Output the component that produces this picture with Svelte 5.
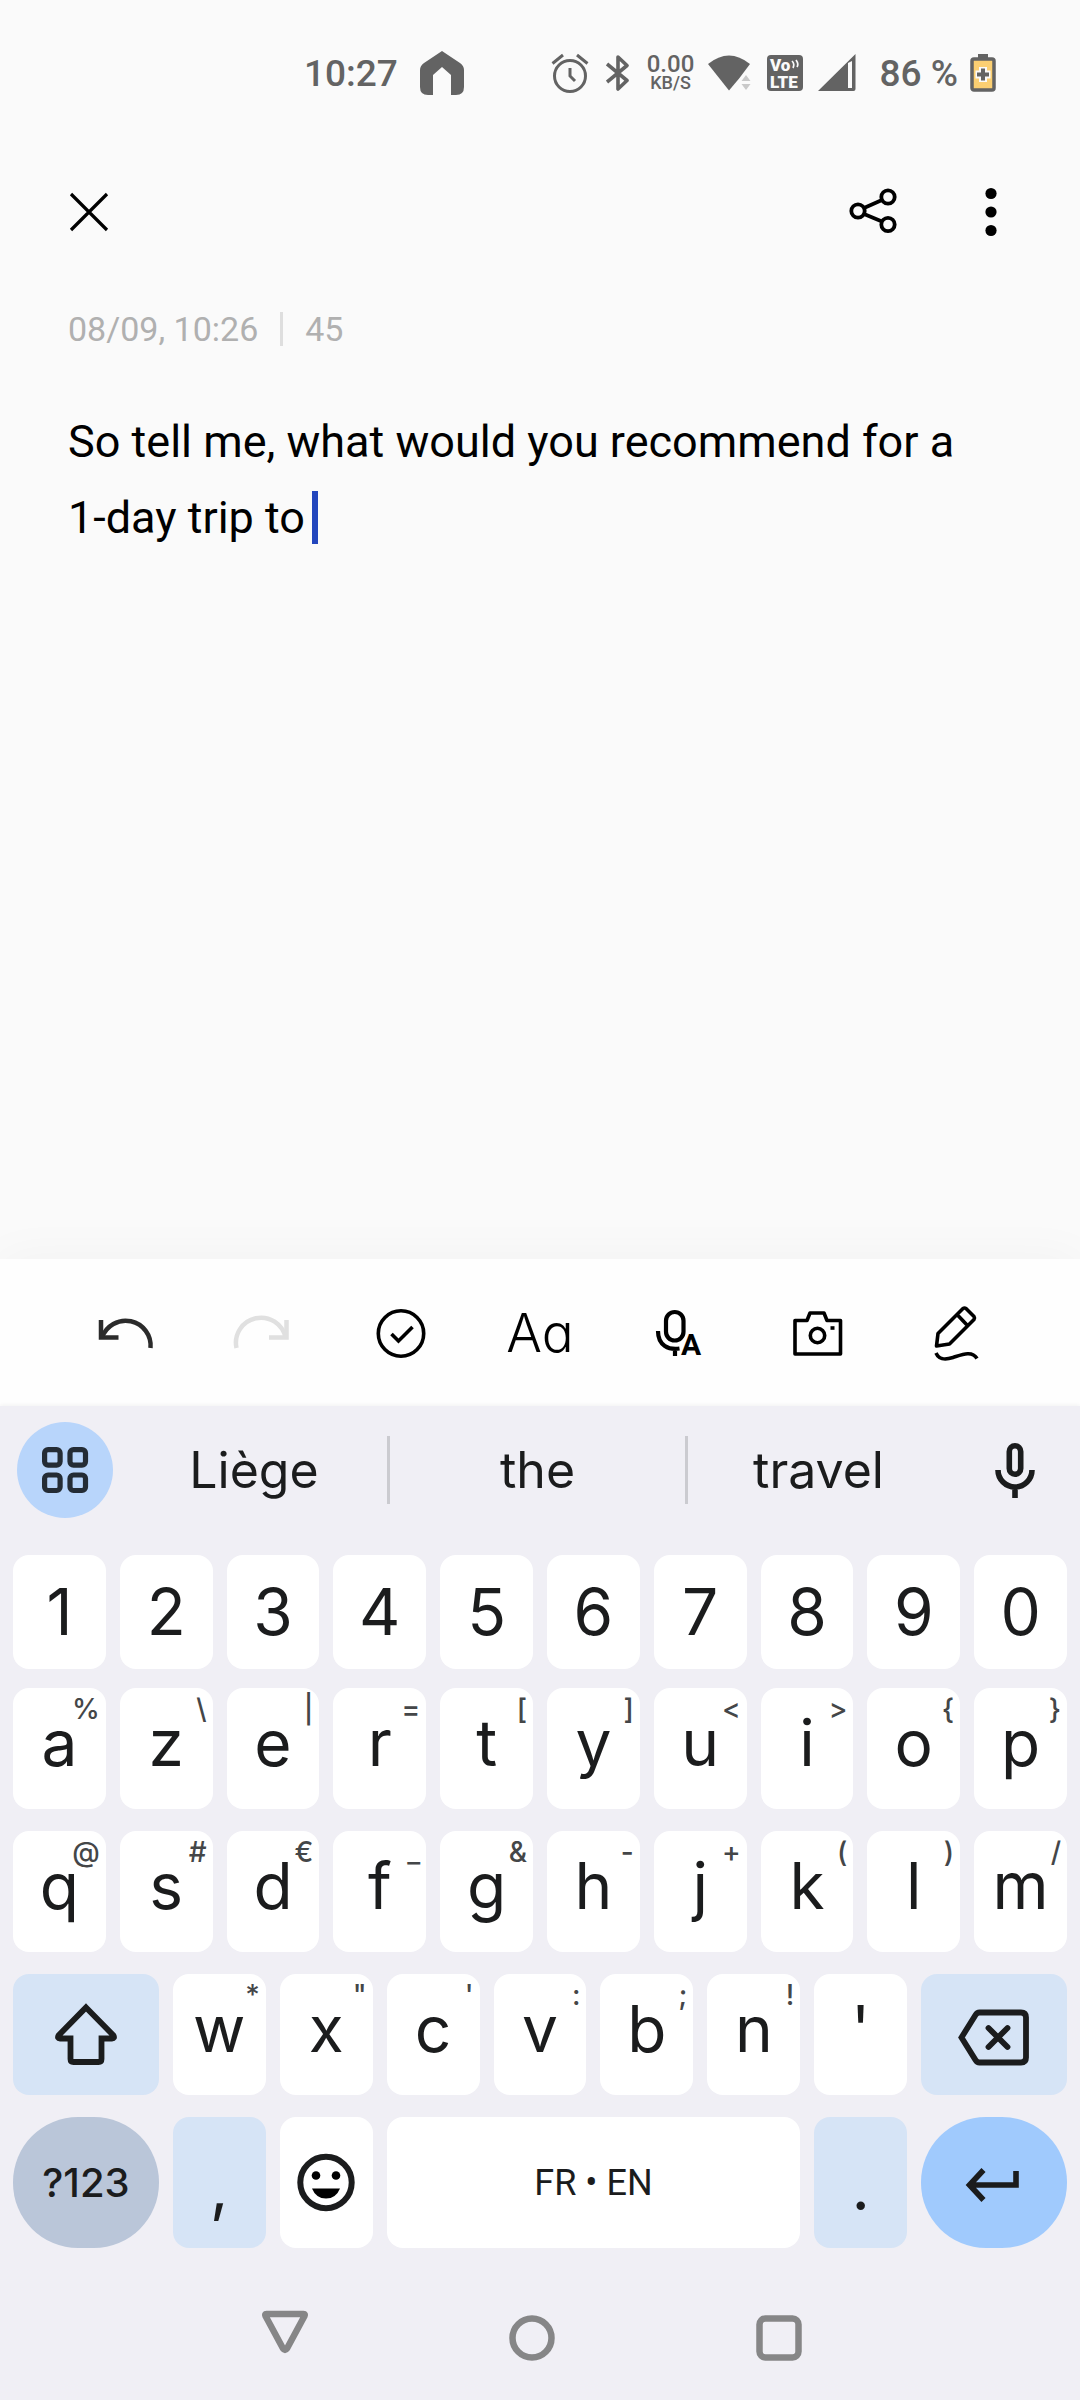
<script>
  let note = $state('So tell me, what would you recommend for a 1-day trip to ');

  const digits = ['1', '2', '3', '4', '5', '6', '7', '8', '9', '0'];
  const top = [['a', '%'], ['z', '\\'], ['e', '|'], ['r', '='], ['t', '['], ['y', ']'], ['u', '<'], ['i', '>'], ['o', '{'], ['p', '}']];
  const home = [['q', '@'], ['s', '#'], ['d', '€'], ['f', '_'], ['g', '&'], ['h', '-'], ['j', '+'], ['k', '('], ['l', ')'], ['m', '/']];
  const bottom = [['w', '*'], ['x', '"'], ['c', "'"], ['v', ':'], ['b', ';'], ['n', '!'], ["'", '']];
</script>

{#snippet key(label, hint)}
  <button class="key letter">
    {label}{#if hint}<span class="hint">{hint}</span>{/if}
  </button>
{/snippet}

<div class="screen">
  <header class="status">
    <div class="clock">
      <span>10:27</span>
      <svg width="44" height="44" viewBox="0 0 44 44"><path fill="#636363" d="M22 0 40 12q4 3 4 7v17q0 8-8 8h-5V24l-9-8-9 8v20H8q-8 0-8-8V19q0-4 4-7z"/></svg>
    </div>
    <div class="indicators">
      <svg width="38" height="40" viewBox="0 0 38 40" fill="none" stroke="#636363" stroke-width="3"><circle cx="19" cy="23" r="15.500"/><path d="M19 15v8l5 5M1.500 10.500 12 2M36.500 10.500 26 2"/></svg>
      <svg class="bt" width="24" height="38" viewBox="0 0 24 38" fill="none" stroke="#636363" stroke-width="3.600" stroke-linejoin="round"><path d="m1 10 20 16.500-9 8.500V3L21 11.500 1 28"/></svg>
      <div class="speed"><span class="rate">0.00</span><span class="unit">KB/S</span></div>
      <svg class="wifi" width="44" height="38" viewBox="0 0 44 38"><path fill="#636363" d="M0 10Q21-7 42 10L31.500 24 21 36.500z"/><path fill="#c9c9c9" d="m38 21 4.500 6h-9zM38 36l4.500-6h-9z"/></svg>
      <svg class="volte" width="36" height="38" viewBox="0 0 36 38"><rect y="1" width="36" height="36" rx="4" fill="#636363"/><text x="3" y="17" class="vo">Vo</text><text x="3" y="34" class="vo">LTE</text><path d="M25 7q3 3 1 7M29 6q3 4 1 7" fill="none" stroke="#fafafa" stroke-width="1.700"/></svg>
      <svg class="signal" width="38" height="38" viewBox="0 0 38 38"><path fill="#636363" d="M37.500 0v35q0 2-2 2H0zM30 9v25h4V7z" fill-rule="evenodd"/></svg>
      <span>86 %</span>
      <svg class="battery" width="26" height="40" viewBox="0 0 26 40"><path fill="#636363" d="M8 1h10v4H8z"/><rect x="2" y="6" width="22" height="31" rx="2" fill="#fbcf72" stroke="#636363" stroke-width="3.500"/><path d="M13 14v15M5.500 21.500h15" stroke="#fafafa" stroke-width="8"/><path d="M13 15.500v12M7 21.500h12" stroke="#636363" stroke-width="4"/></svg>
    </div>
  </header>

  <nav class="appbar" aria-label="Note">
    <button class="plain" aria-label="Close"><svg width="44" height="44" viewBox="0 0 44 44" stroke="#000" stroke-width="3.200"><path d="m4 4 36 36M40 4 4 40"/></svg></button>
    <span class="spacer"></span>
    <button class="plain" aria-label="Share"><svg width="52" height="48" viewBox="0 0 52 48" fill="none" stroke="#000" stroke-width="3.800"><circle cx="11" cy="23" r="6.700"/><circle cx="41" cy="9" r="6.700"/><circle cx="41" cy="36.500" r="6.700"/><path d="m17 20 18-8M17 26l18 7.500"/></svg></button>
    <button class="plain" aria-label="More options"><svg width="24" height="52" viewBox="0 0 24 52"><circle cx="12" cy="7.500" r="5.600"/><circle cx="12" cy="26" r="5.600"/><circle cx="12" cy="44.500" r="5.600"/></svg></button>
  </nav>

  <div class="meta"><span>08/09, 10:26</span><i></i><span>45</span></div>

  <main class="editor">
    <textarea aria-label="Note text" bind:value={note} spellcheck="false"></textarea>
    <span class="caret"></span>
  </main>

  <div class="toolbar">
    <button class="plain" aria-label="Undo"><svg width="64" height="64" viewBox="0 0 64 64" fill="none" stroke="#2b2b2b" stroke-width="4.500"><path d="M10 19v17.500h17.500"/><path d="M11 36.500A25 25 0 0 1 59.500 47"/></svg></button>
    <button class="plain" aria-label="Redo" disabled><svg width="64" height="64" viewBox="0 0 64 64" fill="none" stroke="#e0e0e0" stroke-width="4.500"><path d="M56.500 19v17.500H39"/><path d="M55.500 36.500A25 25 0 0 0 6.500 47"/></svg></button>
    <button class="plain" aria-label="Checklist"><svg width="64" height="64" viewBox="0 0 64 64" fill="none" stroke="#000" stroke-width="3.600"><circle cx="32" cy="32.500" r="22.700"/><path d="m22.500 33 7 7L43.500 26"/></svg></button>
    <button class="plain format" aria-label="Text format">Aa</button>
    <button class="plain" aria-label="Voice to text"><svg width="64" height="64" viewBox="0 0 64 64" fill="none" stroke="#000" stroke-width="4.200"><rect x="19" y="11" width="17.500" height="28.500" rx="8.700"/><path d="M11 30c0 15 11 19 21.500 17.500M28 47v8"/><text x="34" y="54" class="mic-a">A</text></svg></button>
    <button class="plain" aria-label="Camera"><svg width="64" height="64" viewBox="0 0 64 64" fill="none" stroke="#000" stroke-width="3.600" stroke-linejoin="round"><path d="M9 19.500h12l3-7.500h14l3 7.500H54.500V53H9V19.500z"/><circle cx="31.500" cy="34.500" r="7.200"/><path d="M44.500 27h4"/></svg></button>
    <button class="plain" aria-label="Draw"><svg width="64" height="64" viewBox="0 0 64 64" fill="none" stroke="#000" stroke-width="3.600" stroke-linejoin="round"><path d="M11.500 45 13 32.500 38 7.500q1.500-1 3 0l8 8q1 1.500 0 3L24.500 43zM32.500 14 42 24"/><path d="M11 52c3 7 9 7 17 4.500s19-7.500 24 1"/></svg></button>
  </div>

  <section class="keyboard" aria-label="Keyboard">
    <div class="suggest">
      <div class="slot"><button class="plain grid-btn" aria-label="Keyboard tools"><svg width="48" height="48" viewBox="0 0 48 48" fill="none" stroke="#242c35" stroke-width="5.200"><rect x="3.600" y="3.600" width="15.500" height="15.500" rx="3.500"/><rect x="29" y="3.600" width="15.500" height="15.500" rx="3.500"/><rect x="3.600" y="29" width="15.500" height="15.500" rx="3.500"/><rect x="29" y="29" width="15.500" height="15.500" rx="3.500"/></svg></button></div>
      <button class="plain word">Liège</button>
      <button class="plain word">the</button>
      <button class="plain word">travel</button>
      <button class="plain" aria-label="Voice input"><svg width="40" height="56" viewBox="0 0 40 56" fill="none" stroke="#1b1c1d" stroke-width="5.600"><rect x="14.300" y="3.800" width="11.400" height="28.500" rx="5.700"/><path d="M3 28a17 17 0 0 0 34 0M20 45v11"/></svg></button>
    </div>

    <div class="keys">
      <div class="row ten digits">
        {#each digits as d}<button class="key digit">{d}</button>{/each}
      </div>
      <div class="row ten">{#each top as [l, h]}{@render key(l, h)}{/each}</div>
      <div class="row ten">{#each home as [l, h]}{@render key(l, h)}{/each}</div>
      <div class="row nine">
        <button class="key tint" aria-label="Shift"><svg width="64" height="64" viewBox="0 0 64 64" fill="none" stroke="#1b1c1d" stroke-width="5.800"><path d="M32 4.500 59.500 32.500Q61 35.500 58 35.500H47.500V56q0 3-3 3h-25q-3 0-3-3V35.500H6q-3 0-1.500-3z"/></svg></button>
        {#each bottom as [l, h]}{@render key(l, h)}{/each}
        <button class="key tint" aria-label="Backspace"><svg width="72" height="64" viewBox="0 0 72 64" fill="none" stroke="#1b1c1d" stroke-width="5.800"><path d="M3.500 34.500 17.500 12q1.500-2.500 4-2.500H63q5 0 5 5v40q0 5-5 5H21.500q-2.500 0-4-2.500z"/><path stroke-linecap="round" d="m30.500 25 19 19M49.500 25l-19 19"/></svg></button>
      </div>
      <div class="row last">
        <button class="key symbols">?123</button>
        <button class="key tint punct">,</button>
        <button class="key" aria-label="Emoji"><svg width="60" height="60" viewBox="0 0 60 60"><circle cx="30" cy="29.500" r="25.700" fill="none" stroke="#1b1c1d" stroke-width="6"/><circle cx="20" cy="22.500" r="4.300"/><circle cx="40" cy="22.500" r="4.300"/><path d="M16 35.500h28q-4 10-14 10t-14-10z"/></svg></button>
        <button class="key space">FR • EN</button>
        <button class="key tint punct">.</button>
        <button class="key enter" aria-label="Enter"><svg width="64" height="64" viewBox="0 0 64 64" fill="none" stroke="#1b1c1d" stroke-width="5.600"><path d="m21.500 19-14 15 14 15M8 34h46V20"/></svg></button>
      </div>
    </div>

    <nav class="sysnav" aria-label="System">
      <button class="plain" aria-label="Hide keyboard"><svg width="48" height="56" viewBox="0 0 48 56" fill="none" stroke="#868687" stroke-width="6.500" stroke-linejoin="round"><path d="M5.500 8h37q2 0 1 2L26 42.500q-2 3-4 0L4.500 10q-1-2 1-2z"/></svg></button>
      <button class="plain" aria-label="Home"><svg width="48" height="56" viewBox="0 0 48 56" fill="none" stroke="#868687" stroke-width="6.500"><circle cx="24" cy="32" r="19.500"/></svg></button>
      <button class="plain" aria-label="Recent apps"><svg width="48" height="56" viewBox="0 0 48 56" fill="none" stroke="#868687" stroke-width="6.500"><rect x="4.500" y="12.500" width="39" height="39" rx="6"/></svg></button>
    </nav>
  </section>
</div>

<style>
  :global(body) { margin: 0; background: #fafafa; }
  .screen { min-height: 100vh; display: flex; flex-direction: column; background: #fafafa; font-family: Roboto, "Liberation Sans", sans-serif; }
  button { border: 0; margin: 0; padding: 0; font: inherit; color: inherit; cursor: pointer; }
  svg { display: block; flex: none; }
  .plain { background: none; display: flex; align-items: center; justify-content: center; }

  .status { height: 146px; box-sizing: border-box; padding: 0 84px 0 304px; display: flex; align-items: center; justify-content: space-between; color: #636363; font-size: 37px; font-weight: 500; }
  .clock, .indicators { display: flex; align-items: center; }
  .clock { gap: 22px; }
  .bt { margin-left: 17px; }
  .speed { display: flex; flex-direction: column; align-items: center; width: 50px; margin-left: 16px; }
  .rate { font-size: 24px; line-height: 20px; }
  .unit { font-size: 18px; line-height: 18px; }
  .wifi { margin-left: 12px; }
  .volte { margin-left: 15px; }
  .vo { font: 900 17px Roboto, sans-serif; fill: #fafafa; }
  .signal { margin-left: 15px; margin-right: 24px; }
  .battery { margin-left: 12px; }

  .appbar { height: 132px; display: flex; align-items: center; padding: 0 77px 0 67px; }
  .spacer { flex: 1; }
  .appbar .plain + .plain { margin-left: 80px; }

  .meta { margin: 34px 68px 0; height: 34px; display: flex; align-items: center; color: #b0b0b0; font-size: 34px; line-height: 34px; }
  .meta i { width: 3px; height: 34px; background: #dedede; margin: 0 22px; }

  .editor { position: relative; flex: 1; display: flex; margin: 58px 108px 0 68px; }
  textarea { flex: 1; border: 0; padding: 0; margin: 0; resize: none; outline: 0; background: none; color: #000; font: 400 45px/76px Roboto, sans-serif; overflow: hidden; caret-color: transparent; }
  .caret { position: absolute; left: 244px; top: 87px; width: 6px; height: 53px; background: #2346bd; }

  .toolbar { height: 147px; padding: 0 53px; display: grid; grid-template-columns: repeat(7, 1fr); background: #fefefe; box-shadow: 0 0 48px rgba(0, 0, 0, .04); }
  .format { font: 400 53px Inter, sans-serif; font-weight: 350; font-feature-settings: "cv11"; color: #000; }
  .mic-a { font: 700 30px Roboto, sans-serif; fill: #000; stroke: none; }

  .keyboard { position: relative; background: #f0eff5; color: #1b1c1d; font-family: Inter, Roboto, sans-serif; box-shadow: 0 -1px 4px rgba(0, 0, 0, .05); }
  .suggest { display: grid; grid-template-columns: 121px 266fr 298fr 264fr 131px; padding: 16px 0 37px; align-items: center; }
  .slot { padding-left: 17px; }
  .grid-btn { width: 96px; height: 96px; border-radius: 50%; background: #b8d5fb; }
  .word { height: 68px; font-size: 50px; }
  .word + .word { border-left: 3px solid #cbcbd0; }

  .keys { padding: 0 13px; display: flex; flex-direction: column; gap: 22px; }
  .row { display: grid; gap: 14px; height: 121px; }
  .ten { grid-template-columns: repeat(10, minmax(0, 1fr)); }
  .nine { grid-template-columns: 146fr repeat(7, 93fr) 146fr; }
  .last { grid-template-columns: 146fr 93fr 93fr 414fr 93fr 146fr; height: 131px; }
  .digits { height: 114px; margin-bottom: -3px; }
  .key { position: relative; min-width: 0; display: flex; align-items: center; justify-content: center; background: #fff; border-radius: 16px; font-size: 64px; line-height: 64px; }
  .letter { padding-bottom: 12px; }
  .hint { position: absolute; top: 7px; right: 6px; font-size: 28px; line-height: 28px; font-weight: 500; color: #444648; }
  .tint { background: #d6e4f6; }
  .punct { padding-top: 8px; }
  .symbols { background: #bac6d9; border-radius: 65px; font-size: 40px; font-weight: 500; }
  .space { font-family: Roboto, sans-serif; font-size: 36px; }
  .enter { background: #a0cafd; border-radius: 65px; }

  .sysnav { height: 152px; padding: 0 177px 0 161px; display: grid; grid-template-columns: repeat(3, 1fr); align-items: center; }
  .sysnav svg { margin-top: 20px; }
</style>
